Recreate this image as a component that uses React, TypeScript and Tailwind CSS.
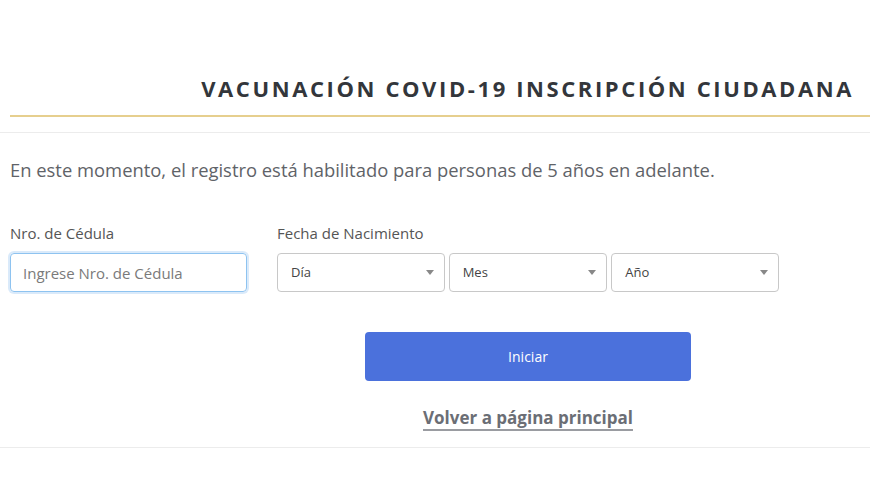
const font = { fontFamily: "'Open Sans', 'Noto Sans', sans-serif" }

function SelectBox({ label, width }: { label: string; width: string }) {
  return (
    <div
      className={`${width} h-[39px] flex items-center justify-between rounded-[4px] border border-[#c8c8c8] bg-white pl-[13px] pr-[10px] text-[13px] text-[#444]`}
    >
      <span>{label}</span>
      {/* caret */}
      <span className="block w-0 h-0 border-l-[4px] border-r-[4px] border-t-[5px] border-l-transparent border-r-transparent border-t-[#888]" />
    </div>
  )
}

export default function App() {
  return (
    <div className="w-[870px] h-[498px] bg-white overflow-hidden" style={font}>
      {/* Header */}
      <div className="pt-[72px] pl-[10px]">
        <h1 className="text-right pr-[16px] text-[22px] font-bold tracking-[2.6px] text-[#33363b] leading-[32px]">
          VACUNACIÓN COVID-19 INSCRIPCIÓN CIUDADANA
        </h1>
        <div className="mt-[11px] h-[2px] bg-[#e6cf8e]" />
      </div>
      <div className="mt-[15px] h-px bg-[#ececec]" />

      {/* Body */}
      <div className="px-[10px]">
        <p className="mt-[24px] text-[18.4px] text-[#5f6368] leading-[26px]">
          En este momento, el registro está habilitado para personas de 5 años en adelante.
        </p>

        <div className="mt-[40px] flex gap-[30px]">
          <div className="flex flex-col">
            <label className="text-[15px] text-[#555] leading-[20px]">Nro. de Cédula</label>
            <input
              className="mt-[10px] w-[237px] h-[39px] rounded-[4px] border border-[#8ec3f0] px-[12px] text-[15px] text-[#555] outline-none shadow-[0_0_0_2px_rgba(150,195,240,0.35)] placeholder:text-[#7a7a7a]"
              placeholder="Ingrese Nro. de Cédula"
              style={font}
            />
          </div>
          <div className="flex flex-col w-[502px]">
            <label className="text-[15px] text-[#555] leading-[20px]">Fecha de Nacimiento</label>
            <div className="mt-[10px] flex gap-[4px]">
              <SelectBox label="Día" width="w-[168px]" />
              <SelectBox label="Mes" width="w-[159px]" />
              <SelectBox label="Año" width="w-[168px]" />
            </div>

            <div className="mt-[40px] flex flex-col items-center">
              <button className="w-[326px] h-[49px] rounded-[4px] bg-[#4b71dc] text-white text-[14px]" style={font}>
                Iniciar
              </button>
              <a className="mt-[24px] text-[17px] font-bold text-[#6b6e75] underline decoration-[2px] underline-offset-[5px] decoration-[#9a9ca1]">
                Volver a página principal
              </a>
            </div>
          </div>
        </div>
      </div>
      <div className="mt-[16px] h-px bg-[#ececec]" />
    </div>
  )
}
